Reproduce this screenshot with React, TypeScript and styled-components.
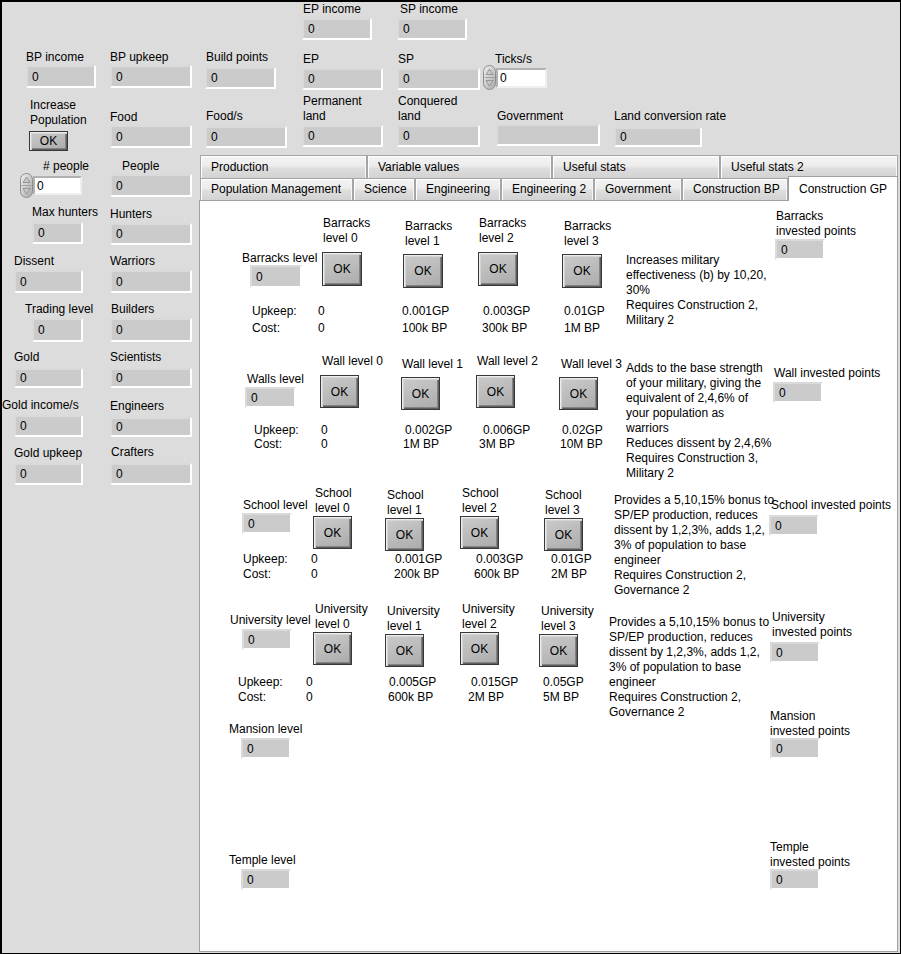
import { FC } from 'react';
import styled, { createGlobalStyle, css } from 'styled-components';

type FieldDef = {
  label: string;
  col: number;
  row: number;
  mt: number;
  w: number;
  h?: number;
  gap?: number;
  ldx?: number;
  bdx?: number;
  value?: string;
};

type LevelDef = {
  label: string;
  ly: number;
  by: number;
  ldx: number;
  up?: string;
  cost?: string;
  vdx?: [number, number];
};

type BuildingDef = {
  top: number;
  left: number;
  mt: number;
  h?: number;
  cols: number[];
  row1: number;
  level: { label: string; y: number; by: number; ldx: number; bdx: number; w: number; h: number };
  levels: LevelDef[];
  btn: [number, number];
  cost?: { y: number; step: number; ldx: number; vdx: number };
  desc?: { text: string; y: number };
  inv: { label: string; y: number; by: number; ldx: number };
};

const headerFields: FieldDef[] = [
  { label: 'EP income', col: 4, row: 1, mt: 2, w: 70, gap: 1, ldx: 1 },
  { label: 'SP income', col: 5, row: 1, mt: 2, w: 70, gap: 1, ldx: 3 },
  { label: 'BP income', col: 1, row: 2, mt: 3, w: 70, h: 23, gap: 0, ldx: 26, bdx: 26 },
  { label: 'BP upkeep', col: 2, row: 2, mt: 3, w: 82, h: 23, gap: 0 },
  { label: 'Build points', col: 3, row: 2, mt: 3, w: 71, gap: 2, ldx: 1 },
  { label: 'EP', col: 4, row: 2, mt: 5, w: 81, gap: 1, ldx: 1 },
  { label: 'SP', col: 5, row: 2, mt: 5, w: 83, gap: 1, ldx: 1 },
  { label: 'Food', col: 2, row: 3, mt: 16, w: 82, h: 23, gap: 0 },
  { label: 'Food/s', col: 3, row: 3, mt: 15, w: 82, gap: 2, ldx: 1 },
  { label: 'Permanent\nland', col: 4, row: 3, mt: 0, w: 81, gap: 1, ldx: 1 },
  { label: 'Conquered\nland', col: 5, row: 3, mt: 0, w: 83, gap: 1, ldx: 1 },
  { label: 'Government', col: 6, row: 3, mt: 15, w: 104, gap: 0, ldx: 15, bdx: 14, value: '' },
  { label: 'Land conversion rate', col: 7, row: 3, mt: 15, w: 88, h: 20, gap: 3 },
];

const leftFields: FieldDef[] = [
  { label: 'People', col: 2, row: 1, mt: 4, w: 82, h: 23, gap: 0, ldx: 12 },
  { label: 'Max hunters', col: 1, row: 2, mt: 2, w: 51, gap: 2, ldx: 32, bdx: 32 },
  { label: 'Hunters', col: 2, row: 2, mt: 4, w: 82, gap: 1 },
  { label: 'Dissent', col: 1, row: 3, mt: 3, w: 69, h: 23, gap: 1, ldx: 14, bdx: 14 },
  { label: 'Warriors', col: 2, row: 3, mt: 3, w: 82, h: 23, gap: 1 },
  { label: 'Trading level', col: 1, row: 4, mt: 3, w: 51, h: 24, gap: 1, ldx: 25, bdx: 32 },
  { label: 'Builders', col: 2, row: 4, mt: 3, w: 82, h: 24, gap: 1, ldx: 1 },
  { label: 'Gold', col: 1, row: 5, mt: 3, w: 69, h: 20, gap: 3, ldx: 14, bdx: 14 },
  { label: 'Scientists', col: 2, row: 5, mt: 3, w: 82, h: 20, gap: 3 },
  { label: 'Gold income/s', col: 1, row: 6, mt: 3, w: 69, gap: 2, ldx: 2, bdx: 14 },
  { label: 'Engineers', col: 2, row: 6, mt: 4, w: 82, h: 20, gap: 3 },
  { label: 'Gold upkeep', col: 1, row: 7, mt: 3, w: 69, gap: 2, ldx: 14, bdx: 14 },
  { label: 'Crafters', col: 2, row: 7, mt: 2, w: 82, gap: 3, ldx: 1 },
];

const tabsTop = [
  { label: 'Production', w: 167 },
  { label: 'Variable values', w: 185 },
  { label: 'Useful stats', w: 168 },
  { label: 'Useful stats 2', w: 178 },
];

const tabsBottom = [
  { label: 'Population Management', w: 153 },
  { label: 'Science', w: 62 },
  { label: 'Engineering', w: 86 },
  { label: 'Engineering 2', w: 93 },
  { label: 'Government', w: 88 },
  { label: 'Construction BP', w: 106 },
  { label: 'Construction GP', w: 110, active: true },
];

const schoolText =
  'Provides a 5,10,15% bonus to\nSP/EP production, reduces\ndissent by 1,2,3%, adds 1,2,\n3% of population to base\nengineer\nRequires Construction 2,\nGovernance 2';

const buildings: BuildingDef[] = [
  {
    top: 209,
    left: 42,
    mt: 8,
    h: 144,
    cols: [80, 81, 75, 84, 64, 149],
    row1: 95,
    level: { label: 'Barracks level', y: 251, by: 265, ldx: 0, bdx: 8, w: 52, h: 23 },
    levels: [
      { label: 'Barracks\nlevel 0', ly: 216, by: 252, ldx: 1 },
      { label: 'Barracks\nlevel 1', ly: 219, by: 254, ldx: 2, up: '0.001GP', cost: '100k BP', vdx: [-1, -1] },
      { label: 'Barracks\nlevel 2', ly: 216, by: 252, ldx: 1, up: '0.003GP', cost: '300k BP', vdx: [5, 4] },
      { label: 'Barracks\nlevel 3', ly: 219, by: 254, ldx: 2, up: '0.01GP', cost: '1M BP', vdx: [2, 2] },
    ],
    btn: [40, 34],
    cost: { y: 305, step: 17, ldx: 10, vdx: 76 },
    desc: {
      text: 'Increases military\neffectiveness (b) by 10,20,\n30%\nRequires Construction 2,\nMilitary 2',
      y: 253,
    },
    inv: { label: 'Barracks\ninvested points', y: 209, by: 239, ldx: 1 },
  },
  {
    top: 353,
    left: 45,
    mt: 0,
    h: 132,
    cols: [75, 81, 75, 83, 67, 147],
    row1: 70,
    level: { label: 'Walls level', y: 372, by: 387, ldx: 2, bdx: 0, w: 51, h: 21 },
    levels: [
      { label: 'Wall level 0', ly: 354, by: 375, ldx: 2 },
      { label: 'Wall level 1', ly: 357, by: 377, ldx: 1, up: '0.002GP', cost: '1M BP', vdx: [4, 2] },
      { label: 'Wall level 2', ly: 354, by: 375, ldx: 1, up: '0.006GP', cost: '3M BP', vdx: [7, 3] },
      { label: 'Wall level 3', ly: 357, by: 377, ldx: 2, up: '0.02GP', cost: '10M BP', vdx: [3, 1] },
    ],
    btn: [39, 33],
    cost: { y: 423, step: 14, ldx: 9, vdx: 76 },
    desc: {
      text: 'Adds to the base strength\nof your military, giving the\nequivalent of 2,4,6% of\nyour population as\nwarriors\nReduces dissent by 2,4,6%\nRequires Construction 3,\nMilitary 2',
      y: 361,
    },
    inv: { label: 'Wall invested points', y: 366, by: 382, ldx: 1 },
  },
  {
    top: 485,
    left: 42,
    mt: 0,
    h: 116,
    cols: [71, 72, 75, 84, 70, 155],
    row1: 67,
    level: { label: 'School level', y: 498, by: 513, ldx: 1, bdx: 0, w: 50, h: 21 },
    levels: [
      { label: 'School\nlevel 0', ly: 486, by: 516, ldx: 2 },
      { label: 'School\nlevel 1', ly: 488, by: 518, ldx: 2, up: '0.001GP', cost: '200k BP', vdx: [10, 9] },
      { label: 'School\nlevel 2', ly: 486, by: 516, ldx: 2, up: '0.003GP', cost: '600k BP', vdx: [16, 14] },
      { label: 'School\nlevel 3', ly: 488, by: 518, ldx: 1, up: '0.01GP', cost: '2M BP', vdx: [7, 7] },
    ],
    btn: [39, 33],
    cost: { y: 552, step: 15, ldx: 1, vdx: 69 },
    desc: { text: schoolText, y: 493 },
    inv: { label: 'School invested points', y: 498, by: 515, ldx: 2 },
  },
  {
    top: 601,
    left: 30,
    mt: 0,
    h: 108,
    cols: [83, 72, 75, 79, 70, 161],
    row1: 74,
    level: { label: 'University level', y: 613, by: 629, ldx: 0, bdx: 12, w: 50, h: 21 },
    levels: [
      { label: 'University\nlevel 0', ly: 602, by: 632, ldx: 2 },
      { label: 'University\nlevel 1', ly: 604, by: 634, ldx: 2, up: '0.005GP', cost: '600k BP', vdx: [4, 3] },
      { label: 'University\nlevel 2', ly: 602, by: 632, ldx: 2, up: '0.015GP', cost: '2M BP', vdx: [11, 8] },
      { label: 'University\nlevel 3', ly: 604, by: 634, ldx: 2, up: '0.05GP', cost: '5M BP', vdx: [4, 4] },
    ],
    btn: [39, 33],
    cost: { y: 675, step: 15, ldx: 8, vdx: 76 },
    desc: { text: schoolText, y: 615 },
    inv: { label: 'University\ninvested points', y: 610, by: 642, ldx: 2 },
  },
  {
    top: 709,
    left: 29,
    mt: 0,
    h: 131,
    cols: [541],
    row1: 60,
    level: { label: 'Mansion level', y: 722, by: 738, ldx: 0, bdx: 12, w: 50, h: 21 },
    levels: [],
    btn: [39, 33],
    inv: { label: 'Mansion\ninvested points', y: 709, by: 738, ldx: 0 },
  },
  {
    top: 840,
    left: 29,
    mt: 0,
    cols: [541],
    row1: 60,
    level: { label: 'Temple level', y: 853, by: 869, ldx: 0, bdx: 12, w: 50, h: 21 },
    levels: [],
    btn: [39, 33],
    inv: { label: 'Temple\ninvested points', y: 840, by: 869, ldx: 0 },
  },
];

const lines = (t: string) => t.split('\n').length;

const Spinner: FC = () => (
  <svg width='13' height='25' viewBox='0 0 13 25'>
    <defs>
      <linearGradient id='spinFill' x1='0' y1='0' x2='1' y2='1'>
        <stop offset='0' stopColor='#f2f2f2' />
        <stop offset='1' stopColor='#a6a6a6' />
      </linearGradient>
    </defs>
    <rect x='0.5' y='0.5' width='12' height='24' rx='6' fill='url(#spinFill)' stroke='#8e8e8e' />
    <line x1='1.5' y1='12.5' x2='11.5' y2='12.5' stroke='#a0a0a0' />
    <path d='M6.5 4 L10 9.5 L3 9.5 Z' fill='#c8c8c8' stroke='#8a8a8a' strokeWidth='0.8' />
    <path d='M6.5 21 L10 15.5 L3 15.5 Z' fill='#c8c8c8' stroke='#8a8a8a' strokeWidth='0.8' />
  </svg>
);

const App: FC = () => (
  <>
    <GlobalStyle />
    <Window>
      <Header>
        {headerFields.map((f) => (
          <NumField key={f.label} f={f} />
        ))}
        <Field $col={1} $row={3} $mt={4}>
          <Label $dx={30}>{'Increase\nPopulation'}</Label>
          <OkButton $w={39} $h={20} $dx={29} $gap={3}>
            OK
          </OkButton>
        </Field>
        <Field $col={6} $row={2} $mt={5}>
          <Label $dx={13}>Ticks/s</Label>
          <SpinRow $dx={1} $gap={-2}>
            <Spinner />
            <Numeric $w={51} $h={20}>0</Numeric>
          </SpinRow>
        </Field>
      </Header>
      <Body>
        <LeftPanel>
          <Field $col={1} $row={1} $mt={4}>
            <Label $dx={43}># people</Label>
            <SpinRow $dx={20} $gap={-1}>
              <Spinner />
              <Numeric $w={49} $h={19}>0</Numeric>
            </SpinRow>
          </Field>
          {leftFields.map((f) => (
            <NumField key={f.label} f={f} />
          ))}
        </LeftPanel>
        <TabControl>
          <TabRow $h={23}>
            {tabsTop.map((t) => (
              <Tab key={t.label} $w={t.w} $h={23} $pt={5}>
                {t.label}
              </Tab>
            ))}
          </TabRow>
          <TabRow $h={22}>
            {tabsBottom.map((t) => (
              <Tab key={t.label} $w={t.w} $h={22} $pt={4} $active={t.active}>
                {t.label}
              </Tab>
            ))}
          </TabRow>
          <Page>
            {buildings.map((b) => (
              <Building key={b.level.label} b={b} />
            ))}
          </Page>
        </TabControl>
      </Body>
    </Window>
  </>
);

const NumField: FC<{ f: FieldDef }> = ({ f }) => (
  <Field $col={f.col} $row={f.row} $mt={f.mt}>
    <Label $dx={f.ldx}>{f.label}</Label>
    <Indicator $dx={f.bdx} $gap={f.gap} $w={f.w} $h={f.h}>
      {f.value ?? '0'}
    </Indicator>
  </Field>
);

const Building: FC<{ b: BuildingDef }> = ({ b }) => {
  const invCol = b.cols.length + 1;
  return (
    <Section
      $left={b.left}
      $mt={b.mt}
      $h={b.h}
      $cols={`${b.cols.map((c) => `${c}px`).join(' ')} auto`}
      $row1={b.row1}
    >
      <Field $col={1} $row={1} $mt={b.level.y - b.top}>
        <Label $dx={b.level.ldx}>{b.level.label}</Label>
        <Indicator
          $dx={b.level.bdx}
          $gap={b.level.by - b.level.y - 15}
          $w={b.level.w}
          $h={b.level.h}
        >
          0
        </Indicator>
      </Field>

      {b.levels.map((l, i) => (
        <Field key={l.label} $col={i + 2} $row={1} $mt={l.ly - b.top}>
          <Label $dx={l.ldx}>{l.label}</Label>
          <OkButton $w={b.btn[0]} $h={b.btn[1]} $gap={l.by - l.ly - lines(l.label) * 15}>
            OK
          </OkButton>
        </Field>
      ))}

      {b.cost && (
        <Field $col={1} $row={2} $mt={0}>
          <CostLine $h={b.cost.step} $dx={b.cost.ldx}>
            <CostName $w={b.cost.vdx - b.cost.ldx}>Upkeep:</CostName>0
          </CostLine>
          <CostLine $h={15} $dx={b.cost.ldx}>
            <CostName $w={b.cost.vdx - b.cost.ldx}>Cost:</CostName>0
          </CostLine>
        </Field>
      )}

      {b.cost &&
        b.levels.map((l, i) =>
          l.up ? (
            <Field key={`${l.label}-v`} $col={i + 2} $row={2} $mt={0}>
              <CostLine $h={b.cost!.step} $dx={l.vdx![0]}>
                {l.up}
              </CostLine>
              <CostLine $h={15} $dx={l.vdx![1]}>
                {l.cost}
              </CostLine>
            </Field>
          ) : null
        )}

      {b.desc && (
        <Desc $col={b.cols.length} $mt={b.desc.y - b.top}>
          {b.desc.text}
        </Desc>
      )}

      <Field $col={invCol} $row='1 / 3' $mt={b.inv.y - b.top}>
        <Label $dx={b.inv.ldx}>{b.inv.label}</Label>
        <Indicator $gap={b.inv.by - b.inv.y - lines(b.inv.label) * 15} $w={50} $h={21}>
          0
        </Indicator>
      </Field>
    </Section>
  );
};

const GlobalStyle = createGlobalStyle`
  html, body {
    margin: 0;
    padding: 0;
    background: #dcdcdc;
  }
`;

const Window = styled.div`
  width: 901px;
  height: 954px;
  box-sizing: border-box;
  background: #dcdcdc;
  box-shadow: inset 2px 2px 0 #000, inset -1px -1px 0 #000;
  overflow: hidden;
  font-family: 'Liberation Sans', Arial, sans-serif;
  font-size: 12px;
  line-height: 15px;
  color: #000;
`;

const Header = styled.div`
  display: grid;
  grid-template-columns: 110px 95px 97px 95px 85px 132px 1fr;
  grid-template-rows: 47px 47px 61px;
  height: 155px;
`;

const Body = styled.div`
  display: flex;
  align-items: flex-start;
`;

const LeftPanel = styled.div`
  width: 199px;
  flex: none;
  display: grid;
  grid-template-columns: 110px 89px;
  grid-template-rows: repeat(7, 48px);
`;

const Field = styled.div<{ $col?: number; $row?: number | string; $mt?: number }>`
  grid-column: ${(p) => p.$col ?? 'auto'};
  grid-row: ${(p) => p.$row ?? 'auto'};
  margin-top: ${(p) => p.$mt ?? 0}px;
  display: flex;
  flex-direction: column;
  align-items: flex-start;
  min-width: 0;
`;

const Label = styled.div<{ $dx?: number }>`
  margin-left: ${(p) => p.$dx ?? 0}px;
  white-space: pre;
  line-height: 15px;
`;

const Indicator = styled.div<{ $dx?: number; $gap?: number; $w: number; $h?: number }>`
  box-sizing: border-box;
  flex: none;
  width: ${(p) => p.$w}px;
  height: ${(p) => p.$h ?? 22}px;
  margin-left: ${(p) => p.$dx ?? 0}px;
  margin-top: ${(p) => p.$gap ?? 2}px;
  padding-left: 4px;
  background: #cbcbcb;
  border: 2px solid;
  border-color: #dadada #ffffff #ffffff #dadada;
  line-height: ${(p) => (p.$h ?? 22) - 3}px;
  white-space: nowrap;
`;

const SpinRow = styled.div<{ $dx: number; $gap: number }>`
  display: flex;
  align-items: center;
  margin-left: ${(p) => p.$dx}px;
  margin-top: ${(p) => p.$gap}px;
  & > svg {
    flex: none;
    display: block;
  }
`;

const Numeric = styled.div<{ $w: number; $h: number }>`
  box-sizing: border-box;
  width: ${(p) => p.$w}px;
  height: ${(p) => p.$h}px;
  padding-left: 2px;
  background: #fff;
  border: 2px solid;
  border-color: #b2b2b2 #efefef #efefef #b2b2b2;
  line-height: ${(p) => p.$h - 3}px;
`;

const OkButton = styled.div<{ $w: number; $h: number; $dx?: number; $gap?: number }>`
  box-sizing: border-box;
  flex: none;
  width: ${(p) => p.$w}px;
  height: ${(p) => p.$h}px;
  margin-left: ${(p) => p.$dx ?? 0}px;
  margin-top: ${(p) => p.$gap ?? 0}px;
  border: 1px solid #383838;
  background: linear-gradient(160deg, #cbcbcb 0%, #bdbdbd 45%, #aaaaaa 100%);
  box-shadow: inset 1px 1px 0 #ededed, inset 2px 2px 0 #d4d4d4, inset -1px -1px 0 #5e5e5e,
    inset -2px -2px 0 #838383;
  display: flex;
  align-items: center;
  justify-content: center;
  padding-top: 1px;
  font-size: 12px;
  line-height: 15px;
  color: #000;
`;

const TabControl = styled.div`
  width: 700px;
  flex: none;
  display: flex;
  flex-direction: column;
`;

const TabRow = styled.div<{ $h: number }>`
  display: flex;
  align-items: flex-start;
  height: ${(p) => p.$h}px;
  margin-left: 1px;
`;

const Tab = styled.div<{ $w: number; $h: number; $pt: number; $active?: boolean }>`
  box-sizing: border-box;
  flex: none;
  width: ${(p) => p.$w}px;
  height: ${(p) => p.$h}px;
  padding: ${(p) => p.$pt - 1}px 0 0 10px;
  border: 1px solid #a5a5a5;
  border-bottom: none;
  background: linear-gradient(180deg, #f4f4f4 0%, #ececec 45%, #dedede 55%, #d2d2d2 100%);
  box-shadow: inset 1px 1px 0 #ffffff, inset -1px 0 0 #f7f7f7;
  white-space: nowrap;
  ${(p) =>
    p.$active &&
    css`
      position: relative;
      z-index: 1;
      height: 25px;
      margin-top: -2px;
      padding-top: 5px;
      background: #ffffff;
      box-shadow: none;
      border-color: #a0a0a0;
    `}
`;

const Page = styled.div`
  box-sizing: border-box;
  width: 699px;
  height: 752px;
  background: #ffffff;
  border: 1px solid #a0a0a0;
  display: flex;
  flex-direction: column;
`;

const Section = styled.div<{ $left: number; $mt: number; $h?: number; $cols: string; $row1: number }>`
  flex: none;
  display: grid;
  grid-template-columns: ${(p) => p.$cols};
  grid-template-rows: ${(p) => p.$row1}px 1fr;
  align-items: start;
  height: ${(p) => (p.$h ? `${p.$h}px` : 'auto')};
  margin-top: ${(p) => p.$mt}px;
  padding-left: ${(p) => p.$left}px;
`;

const CostLine = styled.div<{ $h: number; $dx: number }>`
  height: ${(p) => p.$h}px;
  margin-left: ${(p) => p.$dx}px;
  line-height: 15px;
  white-space: nowrap;
`;

const CostName = styled.span<{ $w: number }>`
  display: inline-block;
  width: ${(p) => p.$w}px;
`;

const Desc = styled.div<{ $col: number; $mt: number }>`
  grid-column: ${(p) => p.$col};
  grid-row: 1 / 3;
  margin-top: ${(p) => p.$mt}px;
  white-space: pre;
  line-height: 15px;
`;

export default App;
